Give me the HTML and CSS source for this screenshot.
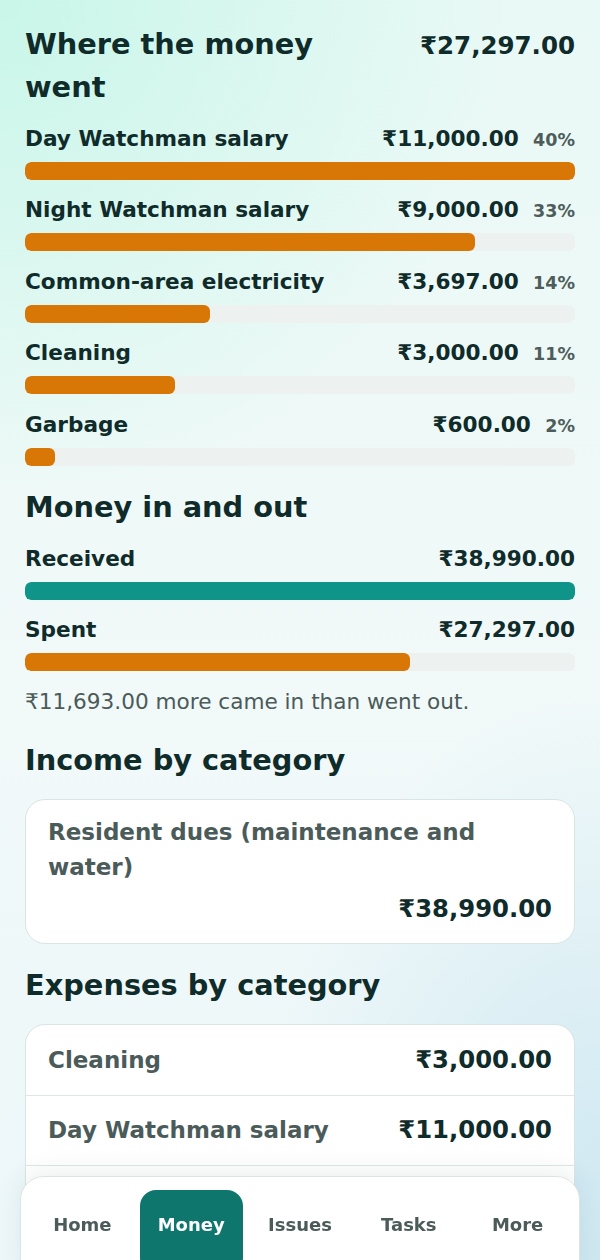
FILE: index.html
```html
<!DOCTYPE html>
<html lang="en">
<head>
<meta charset="utf-8">
<meta name="viewport" content="width=device-width, initial-scale=1">
<title>Money</title>
<link rel="stylesheet" href="styles.css">
</head>
<body>
<main class="page">
  <section class="section breakdown">
    <div class="section-head">
      <h2 class="title">Where the money went</h2>
      <div class="total">₹27,297.00</div>
    </div>
    <ul class="bars">
      <li class="bar-row">
        <div class="bar-info"><span class="bar-label">Day Watchman salary</span><span class="bar-amount">₹11,000.00</span><span class="bar-pct">40%</span></div>
        <div class="track"><div class="fill" style="width:100%"></div></div>
      </li>
      <li class="bar-row">
        <div class="bar-info"><span class="bar-label">Night Watchman salary</span><span class="bar-amount">₹9,000.00</span><span class="bar-pct">33%</span></div>
        <div class="track"><div class="fill" style="width:81.82%"></div></div>
      </li>
      <li class="bar-row">
        <div class="bar-info"><span class="bar-label">Common-area electricity</span><span class="bar-amount">₹3,697.00</span><span class="bar-pct">14%</span></div>
        <div class="track"><div class="fill" style="width:33.61%"></div></div>
      </li>
      <li class="bar-row">
        <div class="bar-info"><span class="bar-label">Cleaning</span><span class="bar-amount">₹3,000.00</span><span class="bar-pct">11%</span></div>
        <div class="track"><div class="fill" style="width:27.27%"></div></div>
      </li>
      <li class="bar-row">
        <div class="bar-info"><span class="bar-label">Garbage</span><span class="bar-amount">₹600.00</span><span class="bar-pct">2%</span></div>
        <div class="track"><div class="fill" style="width:5.45%"></div></div>
      </li>
    </ul>
  </section>

  <section class="section inout">
    <h2 class="title">Money in and out</h2>
    <ul class="bars bars-inout">
      <li class="bar-row">
        <div class="bar-info"><span class="bar-label">Received</span><span class="bar-amount">₹38,990.00</span></div>
        <div class="track"><div class="fill fill-in" style="width:100%"></div></div>
      </li>
      <li class="bar-row">
        <div class="bar-info"><span class="bar-label">Spent</span><span class="bar-amount">₹27,297.00</span></div>
        <div class="track"><div class="fill" style="width:70.01%"></div></div>
      </li>
    </ul>
    <p class="note">₹11,693.00 more came in than went out.</p>
  </section>

  <section class="section cat income">
    <h2 class="title">Income by category</h2>
    <div class="card">
      <div class="card-item stacked">
        <span class="item-label">Resident dues (maintenance and water)</span>
        <span class="item-amount">₹38,990.00</span>
      </div>
    </div>
  </section>

  <section class="section cat expenses">
    <h2 class="title">Expenses by category</h2>
    <div class="card">
      <div class="card-item"><span class="item-label">Cleaning</span><span class="item-amount">₹3,000.00</span></div>
      <div class="card-item"><span class="item-label">Day Watchman salary</span><span class="item-amount">₹11,000.00</span></div>
      <div class="card-item"><span class="item-label">Garbage</span><span class="item-amount">₹600.00</span></div>
      <div class="card-item"><span class="item-label">Night Watchman salary</span><span class="item-amount">₹9,000.00</span></div>
      <div class="card-item"><span class="item-label">Common-area electricity</span><span class="item-amount">₹3,697.00</span></div>
    </div>
  </section>
</main>

<nav class="tabbar">
  <a class="tab">Home</a>
  <a class="tab active">Money</a>
  <a class="tab">Issues</a>
  <a class="tab">Tasks</a>
  <a class="tab">More</a>
</nav>
</body>
</html>
```

FILE: styles.css
```css
* {
  box-sizing: border-box;
  margin: 0;
  padding: 0;
}

html {
  background: #f1f9f9;
}

body {
  font-family: "DejaVu Sans", "Noto Sans", sans-serif;
  color: #0f2b2a;
  min-height: 100vh;
  background:
    radial-gradient(ellipse 85% 40% at 0% 0%, #c9f6e9 0%, rgba(201, 246, 233, 0) 100%),
    radial-gradient(ellipse 60% 45% at 100% 100%, #cde7f1 0%, rgba(205, 231, 241, 0) 100%),
    linear-gradient(180deg, #e9f9f5 0%, #f1f9f9 55%, #edf7f9 100%);
  background-attachment: fixed;
}

.page {
  padding: 22.5px 25px 160px;
  display: flex;
  flex-direction: column;
}

.title {
  font-size: 28.8px;
  line-height: 1.5;
  font-weight: 700;
  color: #0f2b2a;
}

.section-head {
  display: flex;
  align-items: baseline;
  justify-content: space-between;
  gap: 32px;
}

.section-head .title {
  flex: 1;
}

.total {
  font-size: 24.5px;
  font-weight: 700;
  white-space: nowrap;
  color: #0f2b2a;
}

.bars {
  list-style: none;
  display: flex;
  flex-direction: column;
  gap: 14.5px;
  margin-top: 14px;
}

.bars-inout {
  gap: 14px;
  margin-top: 14px;
}

.bar-row {
  display: flex;
  flex-direction: column;
  gap: 7px;
}

.bar-info {
  display: flex;
  align-items: baseline;
  gap: 14.4px;
  height: 32px;
  line-height: 32px;
}

.bar-label {
  flex: 1;
  font-size: 21.6px;
  font-weight: 700;
  color: #0f2b2a;
}

.bar-amount {
  font-size: 21.6px;
  font-weight: 700;
  color: #0f2b2a;
  white-space: nowrap;
}

.bar-pct {
  font-size: 17.5px;
  font-weight: 700;
  color: #4e5d5b;
}

.track {
  height: 18px;
  border-radius: 6px;
  background: #edf2f0;
  overflow: hidden;
}

.fill {
  height: 100%;
  border-radius: 6px;
  background: #d97706;
}

.fill-in {
  background: #0e9488;
}

.inout {
  margin-top: 20px;
}

.note {
  margin-top: 15px;
  font-size: 21.6px;
  line-height: 32.4px;
  color: #4b5b59;
}

.income {
  margin-top: 21px;
}

.expenses {
  margin-top: 20px;
}

.card {
  margin-top: 16px;
  background: #ffffff;
  border: 1px solid #d9e5e2;
  border-radius: 20px;
  overflow: hidden;
}

.expenses .card {
  margin-top: 17px;
}

.card-item {
  display: flex;
  align-items: center;
  justify-content: space-between;
  gap: 16px;
  padding: 16.5px 22px;
  border-top: 1px solid #dde8e5;
}

.card-item:first-child {
  border-top: none;
}

.card-item.stacked {
  flex-direction: column;
  align-items: stretch;
  gap: 7px;
  padding: 15.5px 22px;
}

.item-label {
  font-size: 23px;
  line-height: 34.5px;
  font-weight: 700;
  color: #4b5b59;
}

.item-amount {
  font-size: 24.3px;
  line-height: 36.45px;
  font-weight: 700;
  color: #0f2b2a;
  white-space: nowrap;
  text-align: right;
}

.tabbar {
  position: fixed;
  left: 20px;
  right: 20px;
  bottom: -28px;
  display: grid;
  grid-template-columns: repeat(5, 1fr);
  gap: 6px;
  padding: 13px 10px;
  background: #ffffff;
  border: 1px solid #dbe6e3;
  border-radius: 24px;
  box-shadow: 0 -6px 24px rgba(15, 60, 60, 0.07);
}

.tab {
  display: flex;
  justify-content: center;
  align-items: flex-start;
  height: 84px;
  padding-top: 21px;
  font-size: 18px;
  line-height: 27px;
  font-weight: 700;
  color: #4b5b59;
  text-decoration: none;
  border-radius: 16px;
}

.tab.active {
  background: #0f766e;
  color: #ffffff;
}
```
